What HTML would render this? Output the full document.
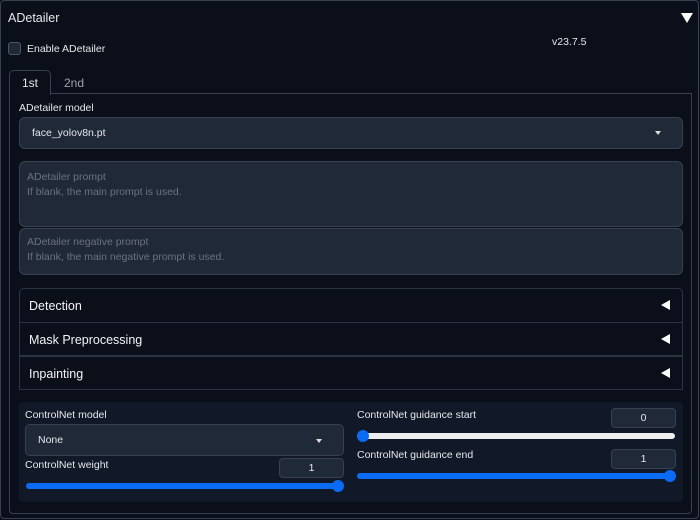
<!DOCTYPE html>
<html><head><style>
*{box-sizing:border-box;margin:0;padding:0}
body{width:700px;height:520px;background:#0b0f19;font-family:"Liberation Sans",sans-serif;color:#e5e7eb;position:relative;overflow:hidden;font-size:12px}
.a{position:absolute}
.t{position:absolute;white-space:nowrap;line-height:1;font-size:10.5px}
.box{position:absolute;background:#1f2937;border:1px solid #374151;border-radius:6px}
.acc{position:absolute;left:19px;width:664px;border:1px solid #2b3443;background:#0b0f19}
.acc span{position:absolute;left:9px;top:10px;font-size:12.5px;color:#f3f4f6}
.tri{position:absolute;right:12px;top:11px;width:0;height:0;border-top:5px solid transparent;border-bottom:5px solid transparent;border-right:9px solid #fff}
.num{position:absolute;background:#1f2937;border:1px solid #374151;border-radius:4px;text-align:center;font-size:10.5px;line-height:18px;color:#e5e7eb}
.track{position:absolute;height:6px;border-radius:3px}
.thumb{position:absolute;width:12px;height:12px;border-radius:6px;background:#0a6cf5}
</style></head><body>
<div class="a" style="left:0;top:0;width:699px;height:519px;border:1px solid #374151;border-radius:4px"></div>
<div class="t" style="left:8px;top:12px;font-size:12.5px">ADetailer</div>
<div class="a" style="left:681px;top:13px;border-left:6px solid transparent;border-right:6px solid transparent;border-top:10px solid #fff"></div>
<div class="a" style="left:8px;top:42px;width:13px;height:13px;border:1px solid #4b5563;border-radius:3px;background:#1f2937"></div>
<div class="t" style="left:27px;top:44px">Enable ADetailer</div>
<div class="t" style="left:552px;top:37px">v23.7.5</div>
<div class="a" style="left:9px;top:93px;width:683px;height:421px;border:1px solid #374151;border-radius:0 0 4px 4px"></div>
<div class="a" style="left:9px;top:70px;width:42px;height:25px;border:1px solid #374151;border-bottom:none;border-radius:5px 5px 0 0;background:#0b0f19"></div>
<div class="t" style="left:22px;top:77px;font-size:12px">1st</div>
<div class="t" style="left:64px;top:77px;font-size:12px;color:#9ca3af">2nd</div>
<div class="t" style="left:19px;top:103px">ADetailer model</div>
<div class="box" style="left:19px;top:117px;width:664px;height:32px"></div>
<div class="t" style="left:32px;top:128px">face_yolov8n.pt</div>
<div class="a" style="left:655px;top:131px;border-left:3px solid transparent;border-right:3px solid transparent;border-top:4px solid #ddd"></div>
<div class="box" style="left:19px;top:161px;width:664px;height:66px"></div>
<div class="t" style="left:27px;top:172px;color:#6b7280">ADetailer prompt</div>
<div class="t" style="left:27px;top:187px;color:#6b7280">If blank, the main prompt is used.</div>
<div class="box" style="left:19px;top:228px;width:664px;height:47px"></div>
<div class="t" style="left:27px;top:237px;color:#6b7280">ADetailer negative prompt</div>
<div class="t" style="left:27px;top:252px;color:#6b7280">If blank, the main negative prompt is used.</div>
<div class="acc" style="top:288px;height:35px;border-radius:5px 5px 0 0"><span>Detection</span><i class="tri"></i></div>
<div class="acc" style="top:322px;height:34px"><span>Mask Preprocessing</span><i class="tri"></i></div>
<div class="acc" style="top:356px;height:34px"><span>Inpainting</span><i class="tri"></i></div>
<div class="a" style="left:19px;top:402px;width:664px;height:100px;background:#111827;border-radius:4px"></div>
<div class="t" style="left:25px;top:410px">ControlNet model</div>
<div class="box" style="left:25px;top:424px;width:319px;height:32px;border-radius:5px"></div>
<div class="t" style="left:38px;top:435px">None</div>
<div class="a" style="left:316px;top:439px;border-left:3px solid transparent;border-right:3px solid transparent;border-top:4px solid #ddd"></div>
<div class="t" style="left:25px;top:460px">ControlNet weight</div>
<div class="num" style="left:279px;top:458px;width:65px;height:20px">1</div>
<div class="track" style="left:26px;top:483px;width:316px;background:#0a6cf5"></div>
<div class="thumb" style="left:332px;top:480px"></div>
<div class="t" style="left:357px;top:410px">ControlNet guidance start</div>
<div class="num" style="left:611px;top:408px;width:65px;height:20px">0</div>
<div class="track" style="left:357px;top:433px;width:318px;background:#eee"></div>
<div class="thumb" style="left:357px;top:430px"></div>
<div class="t" style="left:357px;top:450px">ControlNet guidance end</div>
<div class="num" style="left:611px;top:449px;width:65px;height:20px">1</div>
<div class="track" style="left:357px;top:473px;width:318px;background:#0a6cf5"></div>
<div class="thumb" style="left:664px;top:470px"></div>
</body></html>
